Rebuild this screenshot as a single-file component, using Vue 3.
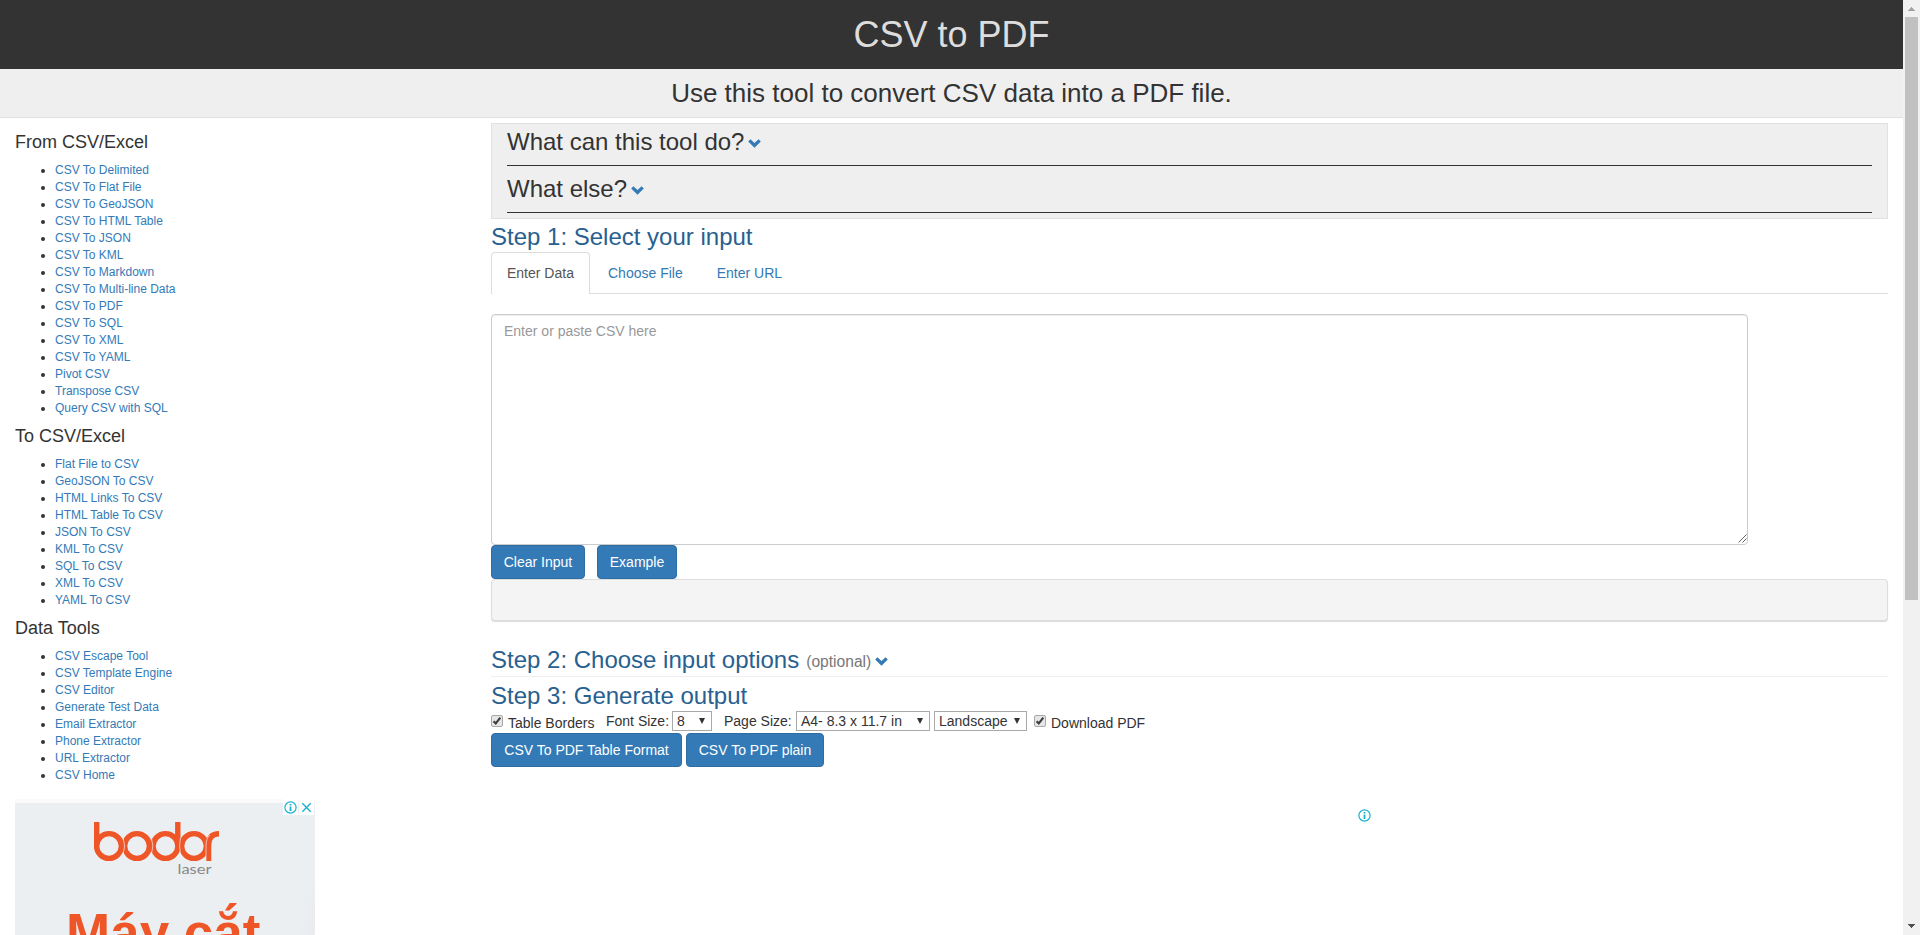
<script setup>
const groups = [
  { title: 'From CSV/Excel', items: ['CSV To Delimited', 'CSV To Flat File', 'CSV To GeoJSON', 'CSV To HTML Table', 'CSV To JSON', 'CSV To KML', 'CSV To Markdown', 'CSV To Multi-line Data', 'CSV To PDF', 'CSV To SQL', 'CSV To XML', 'CSV To YAML', 'Pivot CSV', 'Transpose CSV', 'Query CSV with SQL'] },
  { title: 'To CSV/Excel', items: ['Flat File to CSV', 'GeoJSON To CSV', 'HTML Links To CSV', 'HTML Table To CSV', 'JSON To CSV', 'KML To CSV', 'SQL To CSV', 'XML To CSV', 'YAML To CSV'] },
  { title: 'Data Tools', items: ['CSV Escape Tool', 'CSV Template Engine', 'CSV Editor', 'Generate Test Data', 'Email Extractor', 'Phone Extractor', 'URL Extractor', 'CSV Home'] }
]
const questions = ['What can this tool do?', 'What else?']
</script>

<template>
  <div class="window">
    <div class="page">
      <header class="title"><h1>CSV to PDF</h1></header>
      <div class="subtitle">Use this tool to convert CSV data into a PDF file.</div>
      <div class="columns">
        <aside class="sidebar">
          <section v-for="g in groups" :key="g.title">
            <h4>{{ g.title }}</h4>
            <ul>
              <li v-for="i in g.items" :key="i"><a>{{ i }}</a></li>
            </ul>
          </section>
          <div class="ad">
            <svg class="brand" width="130" height="60" viewBox="90 820 130 60">
              <g fill="none" stroke="#ee5527" stroke-width="5.4">
                <path d="M96.7 822V846" />
                <circle cx="109" cy="846" r="12.4" />
                <circle cx="137" cy="846" r="12.4" />
                <circle cx="165.500" cy="846" r="12.400" />
                <path d="M177.800 822V846" />
                <circle cx="194" cy="846" r="12.400" />
                <path d="M208.600 861V845Q208.600 833.700 219 833.700" />
              </g>
              <g fill="none" stroke="#edeff1" stroke-width="0.7">
                <path d="M123.200 838Q126 846 123.200 854M151.500 838Q154.200 846 151.500 854M180.400 838Q178.800 846 180.400 854M206 861V846Q206 838 210 835" />
              </g>
              <text x="177.500" y="874" textLength="34" lengthAdjust="spacingAndGlyphs" class="brand-sub">laser</text>
            </svg>
            <div class="ad-line">Máy cắt</div>
            <div class="ad-badges">
              <span><svg width="13" height="13" viewBox="0 0 13 13"><circle cx="6.500" cy="6.500" r="5.600" fill="none" stroke="#18b3cf" stroke-width="1.200" /><path d="M6.500 2.900V4.500M6.500 5.500V10" stroke="#18b3cf" stroke-width="1.800" /></svg></span>
              <span><svg width="13" height="13" viewBox="0 0 13 13"><path d="M2.300 2.300L10.700 10.700M10.700 2.300L2.300 10.700" stroke="#18b3cf" stroke-width="1.400" /></svg></span>
            </div>
          </div>
        </aside>

        <main>
          <div class="info">
            <div v-for="q in questions" :key="q" class="question">
              <span>{{ q }}</span>
              <svg class="chev" viewBox="0 0 13 9"><path d="M0.200 2.400L2.400 0.200L6.500 4.100L10.600 0.200L12.800 2.400L6.500 8.700Z" /></svg>
            </div>
          </div>
          <h2 class="step first">Step 1: Select your input</h2>
          <nav class="tabs">
            <a class="active">Enter Data</a>
            <a>Choose File</a>
            <a>Enter URL</a>
          </nav>
          <div class="input-wrap">
            <textarea placeholder="Enter or paste CSV here"></textarea>
            <svg class="grip" width="9" height="9" viewBox="0 0 9 9"><path d="M0.500 8.500L8.500 0.500M4.500 8.500L8.500 4.500" stroke="#555" stroke-width="0.900" /></svg>
          </div>
          <div class="buttons wide">
            <button class="w94">Clear Input</button>
            <button class="w80">Example</button>
          </div>
          <div class="well"></div>
          <h2 class="step second">
            <span>Step 2: Choose input options</span><small>(optional)</small>
            <svg class="chev" viewBox="0 0 13 9"><path d="M0.200 2.400L2.400 0.200L6.500 4.100L10.600 0.200L12.800 2.400L6.500 8.700Z" /></svg>
          </h2>
          <h2 class="step third">Step 3: Generate output</h2>
          <div class="options">
            <label class="check borders">
              <svg width="12" height="12" viewBox="0 0 12 12"><rect x="0.500" y="0.500" width="11" height="11" rx="1.500" fill="#e6e6e6" stroke="#a8a8a8" /><path d="M2.600 6.200L4.800 8.500L9.300 2.700" fill="none" stroke="#3c3c3c" stroke-width="2.100" /></svg>
              <span>Table Borders</span>
            </label>
            <label class="size">Font Size:</label>
            <div class="select s1"><span>8</span><i></i></div>
            <label class="paper">Page Size:</label>
            <div class="select s2"><span>A4- 8.3 x 11.7 in</span><i></i></div>
            <div class="select s3"><span>Landscape</span><i></i></div>
            <label class="check download">
              <svg width="12" height="12" viewBox="0 0 12 12"><rect x="0.500" y="0.500" width="11" height="11" rx="1.500" fill="#e6e6e6" stroke="#a8a8a8" /><path d="M2.600 6.200L4.800 8.500L9.300 2.700" fill="none" stroke="#3c3c3c" stroke-width="2.100" /></svg>
              <span>Download PDF</span>
            </label>
          </div>
          <div class="buttons">
            <button class="w191">CSV To PDF Table Format</button>
            <button class="w138">CSV To PDF plain</button>
          </div>
          <div class="lower-ad">
            <svg width="13" height="13" viewBox="0 0 13 13"><circle cx="6.500" cy="6.500" r="5.600" fill="none" stroke="#18b3cf" stroke-width="1.200" /><path d="M6.500 2.900V4.500M6.500 5.500V10" stroke="#18b3cf" stroke-width="1.800" /></svg>
          </div>
        </main>
      </div>
    </div>
    <div class="scrollbar">
      <svg width="7" height="4" viewBox="0 0 7 4" shape-rendering="crispEdges"><path d="M3 0h1v1h1v1h1v1h1v1H0V3h1V2h1V1h1z" fill="#a3a3a3" /></svg>
      <div class="thumb"></div>
      <svg class="down" width="7" height="4" viewBox="0 0 7 4" shape-rendering="crispEdges"><path d="M0 0h7v1H6v1H5v1H4v1H3V3H2V2H1V1H0z" fill="#505050" /></svg>
    </div>
  </div>
</template>

<style>
html, body { margin: 0; overflow: hidden; background: #fff; }
</style>

<style scoped>
* { box-sizing: border-box; }
.window { display: flex; width: 1920px; height: 935px; overflow: hidden; font: 14px/20px "Liberation Sans", Arial, sans-serif; color: #333; background: #fff; }
.page { width: 1903px; height: 935px; overflow: hidden; }
h1, h2, h4 { margin: 0; font-weight: 400; }
.title { height: 69px; background: #333; }
h1 { padding-top: 15px; font-size: 36px; line-height: 40px; text-align: center; color: #ddd; }
.subtitle { height: 49px; background: #efefef; border-bottom: 1px solid #e1e1e1; font-size: 26px; line-height: 48px; text-align: center; }
.columns { display: flex; }
.sidebar { width: 300px; margin: 14px 176px 0 15px; }
h4 { font-size: 18px; line-height: 20px; height: 20px; margin-bottom: 10px; }
ul { margin: 0 0 9px; padding-left: 40px; font-size: 12px; line-height: 17px; }
li { height: 17px; }
a { color: #337ab7; }
.ad { position: relative; width: 300px; height: 250px; margin-top: 15px; border-top: 4px solid #fafafa; background: linear-gradient(105deg, #eceff2 0 87%, #e9ebef 91%, #f0f1f4 91.500%); }
.brand { position: absolute; left: 75px; top: 17px; }
.brand-sub { font: 14px Lato, sans-serif; fill: #888; }
.ad-line { position: absolute; left: 51px; top: 100px; font-size: 53px; line-height: 60px; font-weight: 700; color: #ee5527; white-space: nowrap; }
.ad-badges { position: absolute; right: 1px; top: -4px; display: flex; gap: 1px; }
.ad-badges span { width: 15px; height: 16px; padding: 2px 1px; background: #fff; }
.ad-badges svg { display: block; }
main { width: 1397px; padding-top: 5px; }
.info { height: 96px; padding: 0 15px; border: 1px solid #e1e1e1; background: #efefef; }
.question { display: flex; height: 42px; border-bottom: 1px solid #333; font-size: 24px; line-height: 26px; padding-top: 5px; }
.question + .question { height: 47px; padding-top: 10px; }
.chev { width: 13px; height: 9px; margin: 10px 0 0 4px; fill: #337ab7; }
.step { font-size: 24px; line-height: 26px; color: #286090; }
.first { height: 33px; padding-top: 5px; }
.tabs { display: flex; height: 42px; border-bottom: 1px solid #ddd; }
.tabs a { height: 42px; padding: 11px 16px; margin-right: 2px; }
.tabs a.active { width: 99px; padding: 10px 15px; color: #555; background: #fff; border: 1px solid #ddd; border-bottom: 0; border-radius: 4px 4px 0 0; }
.input-wrap { position: relative; width: 1257px; height: 231px; margin-top: 20px; }
textarea { display: block; width: 100%; height: 100%; resize: none; padding: 6px 12px; font: inherit; border: 1px solid #ccc; border-radius: 4px; box-shadow: inset 0 1px 1px rgba(0, 0, 0, .075); outline: 0; }
textarea::placeholder { color: #999; opacity: 1; }
.grip { position: absolute; right: 1px; bottom: 2px; }
.buttons { display: flex; gap: 4px; }
.wide { gap: 12px; }
button { height: 34px; padding: 0; border: 1px solid #2e6da4; border-radius: 4px; background: #337ab7; color: #fff; font: inherit; white-space: nowrap; }
.w94 { width: 94px; }
.w80 { width: 80px; }
.w191 { width: 191px; }
.w138 { width: 138px; }
.well { height: 42px; background: #f4f4f4; border: 1px solid #ddd; border-radius: 4px; box-shadow: 0 1px 1px rgba(0, 0, 0, .15); }
.second { display: flex; height: 56px; padding-top: 26px; border-bottom: 1px solid #eee; }
.second small { font-size: 15.600px; line-height: 29px; color: #777; margin-left: 7px; }
.second .chev { margin-left: 4px; }
.third { height: 34px; padding-top: 6px; }
.options { display: flex; height: 22px; line-height: 20px; white-space: nowrap; }
.check { display: flex; }
.check svg { margin-top: 4px; }
.check span { margin: 2px 0 0 5px; }
.borders { width: 115px; }
.size { width: 66px; }
.select { display: flex; align-items: center; justify-content: space-between; height: 20px; padding: 0 6px 0 4px; border: 1px solid #a9a9a9; background: #fff; }
.select i { border: 3.500px solid transparent; border-top: 6px solid #333; border-bottom: 0; }
.s1 { width: 40px; margin-right: 12px; }
.paper { width: 72px; }
.s2 { width: 134px; margin-right: 4px; }
.s3 { width: 93px; margin-right: 7px; }
.lower-ad { height: 13px; margin: 42px 0 0 867px; }
.lower-ad svg { display: block; }
.scrollbar { display: flex; flex-direction: column; align-items: center; width: 17px; padding: 7px 0; background: #f1f1f1; }
.thumb { width: 13px; height: 583px; margin-top: 6px; background: #c1c1c1; }
.down { margin-top: auto; }
</style>
